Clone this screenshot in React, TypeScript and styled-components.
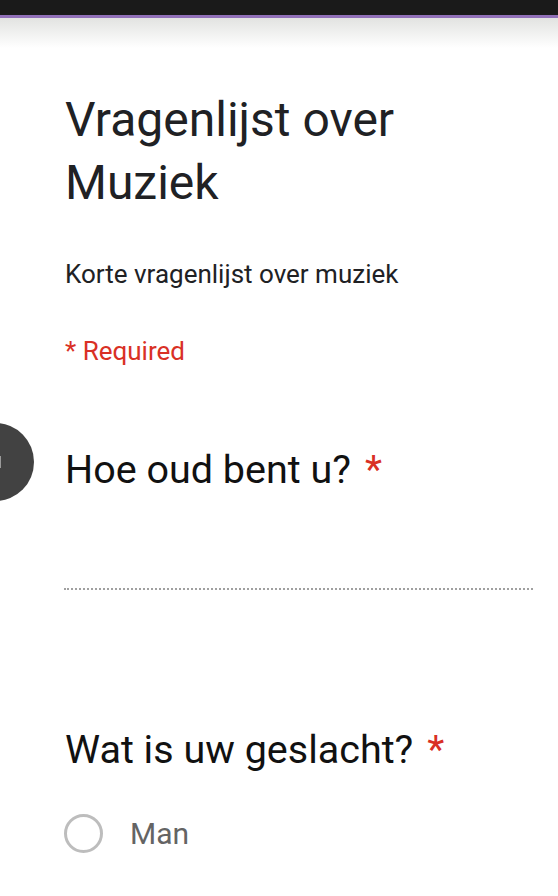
import React from "react";
import styled, { createGlobalStyle } from "styled-components";

const Global = createGlobalStyle`
  html, body { margin: 0; padding: 0; background: #fff; }
  body { font-family: Roboto, "Noto Sans", Arial, sans-serif; overflow: hidden; }
`;

const Page = styled.div`
  position: relative;
  width: 558px;
  height: 896px;
  overflow: hidden;
  background: #fff;
`;

const TopBar = styled.div`
  height: 15px;
  background: #1a1a1a;
`;

const Accent = styled.div`
  height: 3px;
  background: #9170b8;
`;

const Shade = styled.div`
  height: 30px;
  background: linear-gradient(#e2e3e1, #ffffff);
`;

const Content = styled.main`
  padding: 40px 25px 0 65px;
  display: flex;
  flex-direction: column;
`;

const Title = styled.h1`
  margin: 0;
  font-size: 48px;
  font-weight: 400;
  line-height: 63px;
  color: #202124;
`;

const Description = styled.p`
  margin: 45px 0 0;
  font-size: 26px;
  line-height: 30px;
  color: #202124;
`;

const Required = styled.p`
  margin: 47px 0 0;
  font-size: 26px;
  line-height: 30px;
  color: #d93025;
`;

const Question = styled.h2<{ $top: number }>`
  margin: ${(p) => p.$top}px 0 0;
  font-size: 39.5px;
  font-weight: 400;
  line-height: 44px;
  color: #111;
`;

const Star = styled.span`
  color: #d93025;
  margin-left: 14px;
`;

const DottedInput = styled.div`
  margin: 96px 0 0 -1px;
  height: 0;
  border-bottom: 2px dotted #a0a0a0;
`;

const Option = styled.label`
  display: flex;
  align-items: center;
  gap: 27px;
  margin-top: 42px;
  font-size: 30px;
  color: #646464;
`;

const Radio = styled.span`
  width: 39px;
  height: 39px;
  border: 3.5px solid #bdbdbd;
  border-radius: 50%;
  box-sizing: border-box;
  margin-left: -1px;
  flex: none;
`;

const SideButton = styled.div`
  position: absolute;
  left: -43px;
  top: 423px;
  width: 77px;
  height: 78px;
  border-radius: 50%;
  background: #424242;
  display: flex;
  align-items: center;
  justify-content: flex-end;
`;

const SideMark = styled.span`
  width: 2px;
  height: 12px;
  background: #9a9a9a;
  margin-right: 33px;
`;

export default function App() {
  return (
    <Page>
      <Global />
      <TopBar />
      <Accent />
      <Shade />
      <Content>
        <Title>
          Vragenlijst over
          <br />
          Muziek
        </Title>
        <Description>Korte vragenlijst over muziek</Description>
        <Required>* Required</Required>
        <Question $top={82}>
          Hoe oud bent u?<Star>*</Star>
        </Question>
        <DottedInput />
        <Question $top={138}>
          Wat is uw geslacht?<Star>*</Star>
        </Question>
        <Option>
          <Radio />
          Man
        </Option>
      </Content>
      <SideButton>
        <SideMark />
      </SideButton>
    </Page>
  );
}
